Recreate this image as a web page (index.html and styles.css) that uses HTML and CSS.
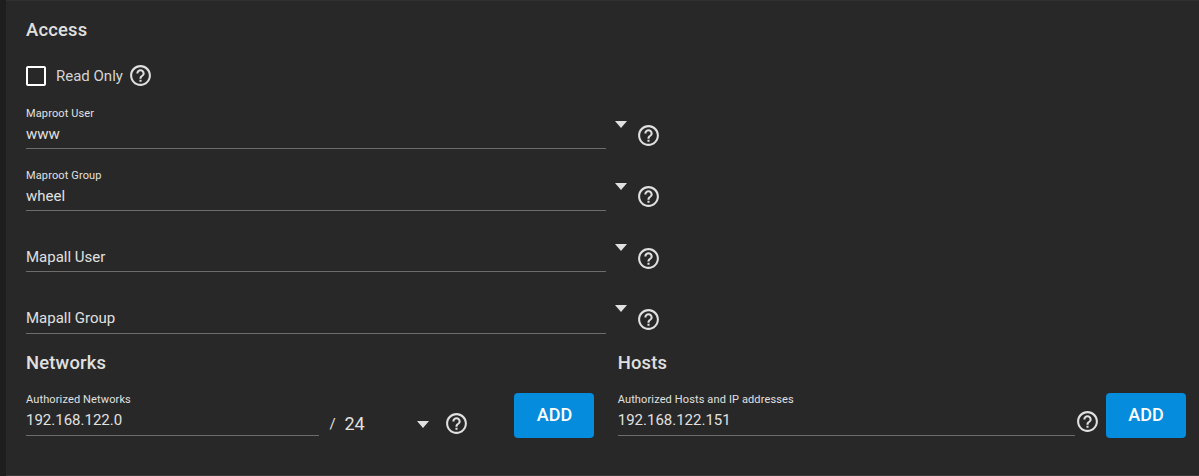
FILE: index.html
```html
<!DOCTYPE html>
<html lang="en">
<head>
<meta charset="utf-8">
<title>Access</title>
<link rel="stylesheet" href="styles.css">
</head>
<body>
<svg class="defs" aria-hidden="true">
  <symbol id="help" viewBox="0 0 24 24"><path d="M11 18h2v-2h-2v2zm1-16C6.48 2 2 6.48 2 12s4.480 10 10 10 10-4.480 10-10S17.520 2 12 2zm0 18c-4.410 0-8-3.590-8-8s3.590-8 8-8 8 3.590 8 8-3.590 8-8 8zm0-14c-2.210 0-4 1.790-4 4h2c0-1.100.9-2 2-2s2 .9 2 2c0 2-3 1.750-3 5h2c0-2.250 3-2.500 3-5 0-2.210-1.790-4-4-4z"/></symbol>
</svg>
<main class="panel">
  <h2 class="title">Access</h2>
  <div class="check-row">
    <span class="checkbox"></span>
    <span class="check-label">Read Only</span>
    <svg class="help"><use href="#help"/></svg>
  </div>
  <div class="row tall">
    <div class="field"><span class="label">Maproot User</span><span class="value">www</span></div>
    <span class="caret"></span><svg class="help"><use href="#help"/></svg>
  </div>
  <div class="row tall">
    <div class="field"><span class="label">Maproot Group</span><span class="value">wheel</span></div>
    <span class="caret"></span><svg class="help up"><use href="#help"/></svg>
  </div>
  <div class="row">
    <div class="field"><span class="value">Mapall User</span></div>
    <span class="caret"></span><svg class="help up"><use href="#help"/></svg>
  </div>
  <div class="row tall">
    <div class="field"><span class="value low">Mapall Group</span></div>
    <span class="caret last"></span><svg class="help up"><use href="#help"/></svg>
  </div>
  <div class="columns">
    <section class="networks">
      <h2 class="title">Networks</h2>
      <div class="entry">
        <div class="field"><span class="label">Authorized Networks</span><span class="value">192.168.122.0</span></div>
        <span class="slash">/</span>
        <span class="mask">24</span>
        <span class="caret"></span>
        <svg class="help"><use href="#help"/></svg>
        <button class="add">ADD</button>
      </div>
    </section>
    <section class="hosts">
      <h2 class="title">Hosts</h2>
      <div class="entry">
        <div class="field"><span class="label">Authorized Hosts and IP addresses</span><span class="value">192.168.122.151</span></div>
        <svg class="help"><use href="#help"/></svg>
        <button class="add">ADD</button>
      </div>
    </section>
  </div>
</main>
</body>
</html>
```
FILE: styles.css
```css
* { box-sizing: border-box; }
body {
  margin: 0;
  height: 476px;
  padding-left: 6px;
  overflow: hidden;
  background: #1e1e1e;
  color: #e0e0e0;
  font-family: Roboto, sans-serif;
  font-size: 15px;
}
.defs { display: none; }
.panel {
  height: 476px;
  padding: 0 0 0 20px;
  background: #282828;
  border-top: 1px solid #303030;
  border-bottom: 1px solid #383838;
}
.title {
  margin: 0;
  font-size: 18.4px;
  font-weight: 500;
  line-height: 24px;
  letter-spacing: 0.2px;
}
.panel > .title { padding-top: 17px; }
.check-row {
  display: flex;
  align-items: center;
  height: 25px;
  margin-top: 21px;
}
.checkbox {
  width: 20px;
  height: 20px;
  border: 2px solid #fff;
  border-radius: 2px;
}
.check-label { width: 72px; margin-left: 10px; color: #d4d4d4; }
.help {
  flex: none;
  width: 25px;
  height: 25px;
  fill: #e0e0e0;
}
.row { display: flex; height: 61px; }
.row.tall { height: 62px; }
.check-row + .row { margin-top: -1px; }
.field {
  display: flex;
  flex-direction: column;
  justify-content: flex-end;
  width: 580px;
  padding-bottom: 5px;
  border-bottom: 1px solid #6c6c6c;
}
.label {
  font-size: 11px;
  line-height: 14px;
  letter-spacing: 0.13px;
  white-space: nowrap;
}
.value { line-height: 18px; margin-top: 4px; }
.value.low { margin-bottom: 1px; }
.caret {
  flex: none;
  width: 12px;
  height: 7px;
  background: #e0e0e0;
  clip-path: polygon(0 0, 100% 0, 50% 100%);
}
.row .caret { margin: 33px 0 0 9px; }
.row.tall .caret { margin-top: 34px; }
.row.tall .caret.last { margin-top: 33px; }
.row .help { margin: 36px 0 0 9px; }
.row .help.up { margin-top: 35px; }
.columns { display: flex; margin-top: 17px; }
.networks { width: 592px; }
.entry { display: flex; margin-top: 18px; height: 45px; }
.entry .field { height: 43px; padding-bottom: 6px; }
.networks .field { width: 293px; }
.slash { width: 15px; margin: 22px 0 0 11px; line-height: 18px; text-indent: -0.5px; }
.mask { width: 72px; margin-top: 20px; font-size: 18px; line-height: 22px; text-indent: -0.5px; }
.networks .caret { margin-top: 28px; }
.networks .help { margin: 18px 0 0 15px; }
.add {
  width: 80px;
  height: 45px;
  padding: 0 0 2px 1px;
  border: 0;
  border-radius: 4px;
  background: #058cdc;
  color: #fff;
  font: 500 18px/42px Roboto, sans-serif;
}
.networks .add { margin-left: 45px; }
.hosts .field { width: 457px; }
.hosts .help { margin: 16px 0 0 -0.4px; }
.hosts .add { margin-left: 6.4px; padding-left: 0; }
.hosts .title, .hosts .field { text-indent: -0.3px; }
```
